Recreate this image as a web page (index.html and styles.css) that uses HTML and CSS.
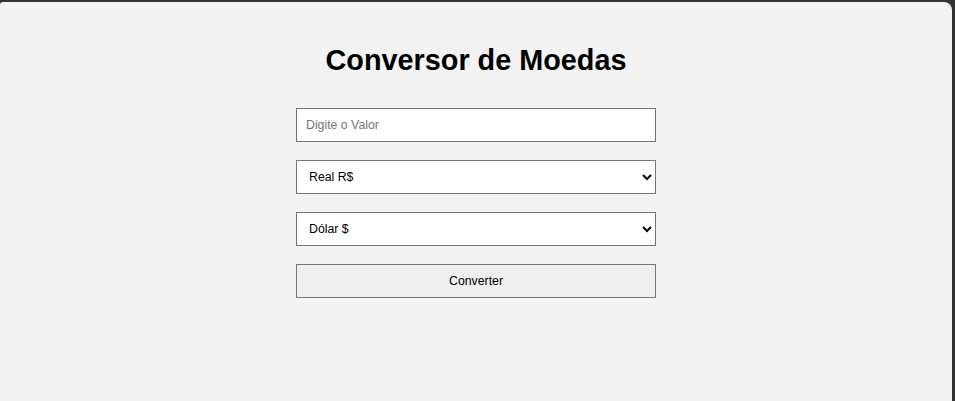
FILE: index.html
```html
<!DOCTYPE html>
<html lang="pt-BR">
<head>
<meta charset="utf-8">
<title>Conversor de Moedas</title>
<link rel="stylesheet" href="styles.css">
</head>
<body>
<div class="window">
  <main class="converter">
    <h1 class="title">Conversor de Moedas</h1>
    <form class="form">
      <input class="field" type="text" placeholder="Digite o Valor">
      <select class="field select">
        <option>Real R$</option>
      </select>
      <select class="field select">
        <option>Dólar $</option>
      </select>
      <button class="btn" type="button">Converter</button>
    </form>
  </main>
</div>
</body>
</html>
```
FILE: styles.css
```css
html, body {
  margin: 0;
  padding: 0;
  height: 100%;
  overflow: hidden;
}
body {
  background: #333333;
  font-family: "Liberation Sans", Arial, sans-serif;
}
.window {
  margin: 2px 3px 0 0;
  height: 399px;
  background: #f3f3f3;
  border-radius: 3px 8px 0 0;
  box-sizing: border-box;
  padding-top: 42px;
}
.converter {
  width: 360px;
  margin: 0 auto;
  display: flex;
  flex-direction: column;
  align-items: stretch;
}
.title {
  margin: 0 -60px 31px;
  font-size: 28.8px;
  line-height: 33px;
  font-weight: bold;
  text-align: center;
  color: #000;
}
.form {
  display: flex;
  flex-direction: column;
  gap: 18px;
}
.field {
  box-sizing: border-box;
  height: 34px;
  width: 100%;
  margin: 0;
  padding: 0 0 1px 9px;
  border: 1px solid #767676;
  border-radius: 0;
  background: #fff;
  font-family: "Liberation Sans", Arial, sans-serif;
  font-size: 12.3px;
  color: #000;
}
.field::placeholder {
  color: #757575;
}
.select {
  padding: 0 5px 1px 8px;
}
.btn {
  box-sizing: border-box;
  height: 34px;
  width: 100%;
  margin: 0;
  padding: 0 0 1px;
  border: 1px solid #767676;
  border-radius: 0;
  background: #efefef;
  font-family: "Liberation Sans", Arial, sans-serif;
  font-size: 12.3px;
  color: #000;
}
```
